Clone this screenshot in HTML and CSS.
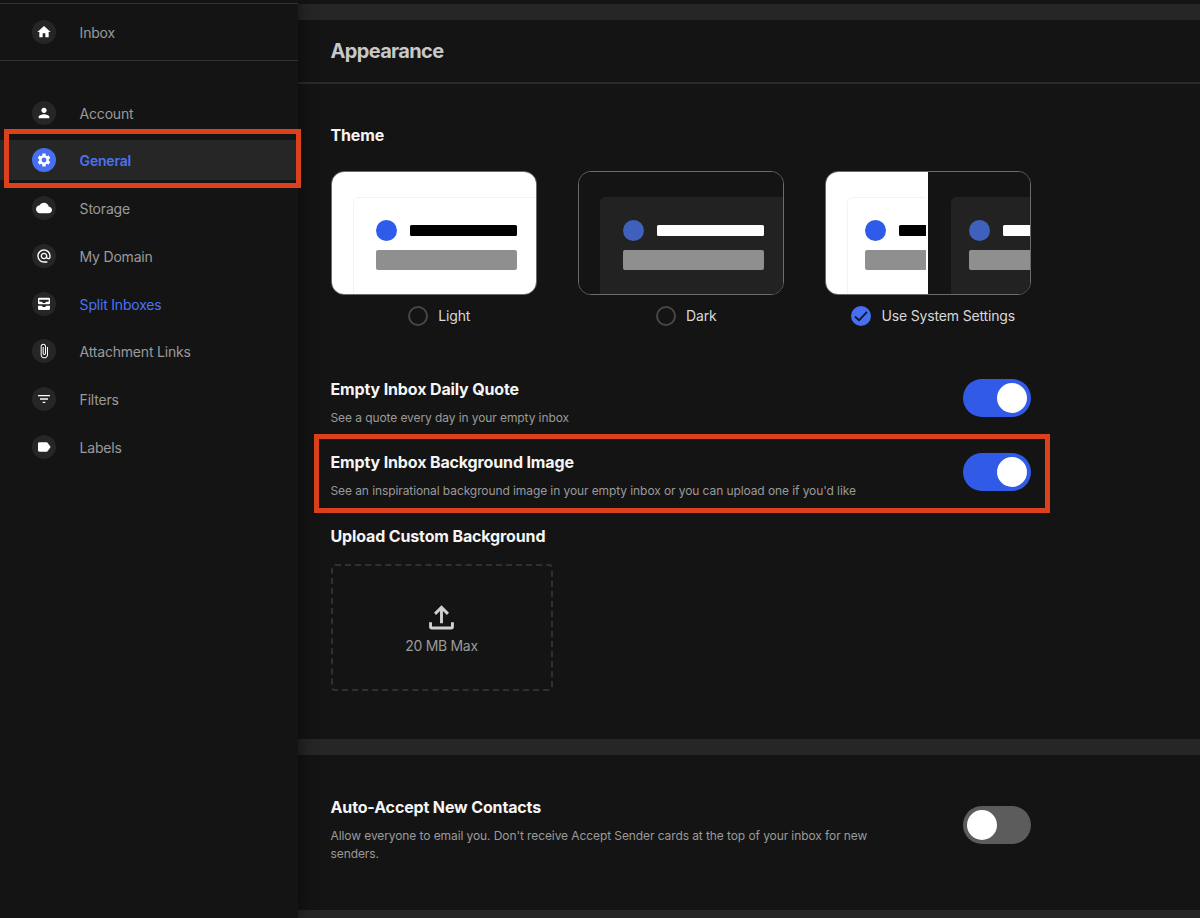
FILE: index.html
```html
<!DOCTYPE html>
<html lang="en">
<head>
    <meta charset="UTF-8">
    <meta name="viewport" content="width=device-width, initial-scale=1.0">
    <title>Settings - General</title>
    <link rel="stylesheet" href="styles.css">
</head>
<body>
    <div class="app">
        <aside class="sidebar">
            <div class="sidebar-top">
                <a class="nav-item">
                    <span class="nav-icon"><svg viewBox="0 0 24 24"><path d="M10 20v-6h4v6h5v-8h3L12 3 2 12h3v8z"/></svg></span>
                    <span class="nav-label">Inbox</span>
                </a>
            </div>

            <nav class="nav-list">
                <a class="nav-item">
                    <span class="nav-icon"><svg viewBox="0 0 24 24"><path d="M12 12c2.21 0 4-1.79 4-4s-1.79-4-4-4-4 1.79-4 4 1.79 4 4 4zm0 2c-2.67 0-8 1.34-8 4v2h16v-2c0-2.66-5.33-4-8-4z"/></svg></span>
                    <span class="nav-label">Account</span>
                </a>
                <a class="nav-item active highlight">
                    <span class="nav-icon"><svg viewBox="0 0 24 24"><path d="M19.14 12.94c.04-.3.06-.61.06-.94 0-.32-.02-.64-.07-.94l2.03-1.58c.18-.14.23-.41.12-.61l-1.92-3.32c-.12-.22-.37-.29-.59-.22l-2.39.96c-.5-.38-1.03-.7-1.62-.94l-.36-2.54c-.04-.24-.24-.41-.48-.41h-3.84c-.24 0-.43.17-.47.41l-.36 2.54c-.59.24-1.13.57-1.62.94l-2.39-.96c-.22-.08-.47 0-.59.22L2.74 8.87c-.12.21-.08.47.12.61l2.03 1.58c-.05.3-.09.63-.09.94s.02.64.07.94l-2.03 1.58c-.18.14-.23.41-.12.61l1.92 3.32c.12.22.37.29.59.22l2.39-.96c.5.38 1.03.7 1.62.94l.36 2.54c.05.24.24.41.48.41h3.84c.24 0 .44-.17.47-.41l.36-2.54c.59-.24 1.13-.56 1.62-.94l2.39.96c.22.08.47 0 .59-.22l1.92-3.32c.12-.22.07-.47-.12-.61l-2.01-1.58zM12 15.6c-1.98 0-3.6-1.62-3.6-3.6s1.62-3.6 3.6-3.6 3.6 1.62 3.6 3.6-1.62 3.6-3.6 3.6z"/></svg></span>
                    <span class="nav-label">General</span>
                </a>
                <a class="nav-item">
                    <span class="nav-icon"><svg viewBox="0 0 24 24"><path d="M19.35 10.04C18.67 6.59 15.64 4 12 4 9.11 4 6.6 5.64 5.35 8.04 2.34 8.36 0 10.91 0 14c0 3.31 2.69 6 6 6h13c2.76 0 5-2.24 5-5 0-2.64-2.05-4.78-4.65-4.96z"/></svg></span>
                    <span class="nav-label">Storage</span>
                </a>
                <a class="nav-item">
                    <span class="nav-icon"><svg viewBox="0 0 24 24"><path d="M12 2C6.48 2 2 6.48 2 12s4.48 10 10 10h5v-2h-5c-4.34 0-8-3.66-8-8s3.66-8 8-8 8 3.66 8 8v1.43c0 .79-.71 1.57-1.5 1.57s-1.5-.78-1.5-1.57V12c0-2.76-2.24-5-5-5s-5 2.24-5 5 2.24 5 5 5c1.38 0 2.64-.56 3.54-1.47.65.89 1.77 1.47 2.96 1.47 1.97 0 3.5-1.6 3.5-3.57V12c0-5.52-4.48-10-10-10zm0 13c-1.66 0-3-1.34-3-3s1.34-3 3-3 3 1.34 3 3-1.34 3-3 3z"/></svg></span>
                    <span class="nav-label">My Domain</span>
                </a>
                <a class="nav-item linked">
                    <span class="nav-icon"><svg viewBox="0 0 24 24"><path fill-rule="evenodd" d="M5 2.5h14a2 2 0 0 1 2 2V11a1.500 1.500 0 0 1-1.500 1.500h-15A1.500 1.500 0 0 1 3 11V4.500a2 2 0 0 1 2-2zM5 5.500v3h3.700c.7 1.400 1.900 2 3.300 2s2.600-.6 3.300-2H19v-3zM3 14.500h5.500c.8 1.400 2 2 3.500 2s2.700-.6 3.500-2H21V19a2 2 0 0 1-2 2H5a2 2 0 0 1-2-2z"/></svg></span>
                    <span class="nav-label">Split Inboxes</span>
                </a>
                <a class="nav-item">
                    <span class="nav-icon"><svg viewBox="0 0 24 24"><path d="M16.500 6v11.500c0 2.210-1.790 4-4 4s-4-1.790-4-4V5c0-1.380 1.120-2.500 2.500-2.500s2.500 1.120 2.500 2.500v10.500c0 .550-.450 1-1 1s-1-.450-1-1V6H10v9.500c0 1.380 1.120 2.500 2.500 2.500s2.500-1.120 2.500-2.500V5c0-2.210-1.790-4-4-4S7 2.790 7 5v12.500c0 3.040 2.460 5.500 5.500 5.500s5.500-2.460 5.500-5.500V6h-1.500z"/></svg></span>
                    <span class="nav-label">Attachment Links</span>
                </a>
                <a class="nav-item">
                    <span class="nav-icon"><svg viewBox="0 0 24 24"><path d="M10 18h4v-2h-4v2zM3 6v2h18V6H3zm3 7h12v-2H6v2z"/></svg></span>
                    <span class="nav-label">Filters</span>
                </a>
                <a class="nav-item">
                    <span class="nav-icon"><svg viewBox="0 0 24 24"><path d="M17.630 5.840C17.270 5.330 16.670 5 16 5L5 5.010C3.900 5.010 3 5.900 3 7v10c0 1.100.9 1.990 2 1.990L16 19c.670 0 1.270-.330 1.630-.840L22 12l-4.370-6.160z"/></svg></span>
                    <span class="nav-label">Labels</span>
                </a>
            </nav>
        </aside>

        <main class="content">
            <section class="panel appearance">
                <h1 class="panel-title">Appearance</h1>

                <div class="panel-body">
                    <h2 class="setting-title">Theme</h2>

                    <div class="theme-grid">
                        <div class="theme-option">
                            <div class="theme-card">
                                <div class="preview light">
                                    <div class="window">
                                        <div class="window-head">
                                            <span class="dot"></span>
                                            <span class="line"></span>
                                        </div>
                                        <div class="block"></div>
                                    </div>
                                </div>
                            </div>
                            <div class="theme-choice">
                                <span class="radio"></span>
                                <span class="theme-name">Light</span>
                            </div>
                        </div>

                        <div class="theme-option">
                            <div class="theme-card">
                                <div class="preview dark">
                                    <div class="window">
                                        <div class="window-head">
                                            <span class="dot"></span>
                                            <span class="line"></span>
                                        </div>
                                        <div class="block"></div>
                                    </div>
                                </div>
                            </div>
                            <div class="theme-choice">
                                <span class="radio"></span>
                                <span class="theme-name">Dark</span>
                            </div>
                        </div>

                        <div class="theme-option">
                            <div class="theme-card split">
                                <div class="preview light">
                                    <div class="window">
                                        <div class="window-head">
                                            <span class="dot"></span>
                                            <span class="line"></span>
                                        </div>
                                        <div class="block"></div>
                                    </div>
                                </div>
                                <div class="preview dark">
                                    <div class="window">
                                        <div class="window-head">
                                            <span class="dot"></span>
                                            <span class="line"></span>
                                        </div>
                                        <div class="block"></div>
                                    </div>
                                </div>
                            </div>
                            <div class="theme-choice">
                                <span class="radio checked"><svg viewBox="0 0 20 20"><path d="M4 10.500l4 3.800 8-8.500"/></svg></span>
                                <span class="theme-name">Use System Settings</span>
                            </div>
                        </div>
                    </div>

                    <div class="setting-row">
                        <div>
                            <h2 class="setting-title">Empty Inbox Daily Quote</h2>
                            <p class="setting-text">See a quote every day in your empty inbox</p>
                        </div>
                        <span class="toggle on"></span>
                    </div>

                    <div class="setting-row highlight">
                        <div>
                            <h2 class="setting-title">Empty Inbox Background Image</h2>
                            <p class="setting-text">See an inspirational background image in your empty inbox or you can upload one if you'd like</p>
                        </div>
                        <span class="toggle on"></span>
                    </div>

                    <div class="upload">
                        <h2 class="setting-title">Upload Custom Background</h2>
                        <div class="upload-box">
                            <svg class="upload-icon" viewBox="0 0 24 24"><path d="M1.500 16.500v4.300a1.200 1.200 0 0 0 1.200 1.200h18.600a1.200 1.200 0 0 0 1.200-1.200v-4.300M12 17.500V2.500M5.800 8.500L12 2.300l6.200 6.200"/></svg>
                            <span>20 MB Max</span>
                        </div>
                    </div>
                </div>
            </section>

            <section class="panel contacts">
                <div class="setting-row">
                    <div>
                        <h2 class="setting-title">Auto-Accept New Contacts</h2>
                        <p class="setting-text">Allow everyone to email you. Don't receive Accept Sender cards at the top of your inbox for new senders.</p>
                    </div>
                    <span class="toggle"></span>
                </div>
            </section>
        </main>
    </div>
</body>
</html>
```
FILE: styles.css
```css
* {
    margin: 0;
    padding: 0;
    box-sizing: border-box;
}

:root {
    --bg: #141414;
    --band: #262626;
    --line: #333;
    --primary: #4a72f5;
    --toggle: #315be6;
    --text: #f5f5f5;
    --muted: #9a9a9a;
    --mark: #dd401d;
}

body {
    height: 918px;
    overflow: hidden;
    background: var(--bg);
    color: var(--text);
    font-family: Inter, "Liberation Sans", sans-serif;
}

.app {
    display: flex;
    height: 918px;
}

/* Sidebar */
.sidebar {
    position: relative;
    z-index: 1;
    width: 298px;
    flex-shrink: 0;
    padding-top: 3px;
    background: var(--bg);
    box-shadow: 0 0 16px rgba(0, 0, 0, 0.6);
}

.sidebar-top {
    height: 58px;
    padding-top: 8px;
    border-top: 1px solid var(--line);
    border-bottom: 1px solid var(--line);
}

.nav-list {
    display: flex;
    flex-direction: column;
    gap: 7.75px;
    padding-top: 31.5px;
}

.nav-item {
    display: flex;
    align-items: center;
    gap: 24px;
    height: 40px;
    padding-left: 31.6px;
    color: var(--muted);
    font-size: 14px;
    letter-spacing: -0.2px;
}

.nav-label {
    padding-top: 1.3px;
}

.nav-icon {
    display: flex;
    align-items: center;
    justify-content: center;
    width: 24px;
    height: 24px;
    border-radius: 50%;
    background: var(--band);
}

.nav-icon svg {
    width: 16px;
    height: 16px;
    fill: #fff;
}

.nav-item.active {
    background: var(--band);
    color: var(--primary);
    font-weight: 600;
}

.nav-item.active .nav-icon {
    background: #466ff2;
}

.nav-item.linked {
    color: var(--primary);
}

/* Red frames around the settings being pointed out */
.highlight {
    position: relative;
}

.highlight::after {
    content: '';
    position: absolute;
    border: 5px solid var(--mark);
}

.nav-item.highlight::after {
    top: -11px;
    right: -3px;
    bottom: -8px;
    left: 4px;
}

.setting-row.highlight::after {
    top: -19px;
    right: -19px;
    bottom: -22px;
    left: -17px;
}

/* Content */
.content {
    flex: 1;
    padding-top: 4px;
}

.panel {
    border-top: 16px solid var(--band);
}

.appearance {
    height: 735px;
}

.contacts {
    height: 187px;
    padding: 50.5px 0 0 32.5px;
    border-bottom: 16px solid var(--band);
}

.panel-title {
    height: 64px;
    padding-left: 32.5px;
    border-bottom: 2px solid #2b2b2b;
    color: #c8c8c8;
    font-size: 20px;
    font-weight: 700;
    letter-spacing: -0.65px;
    line-height: 62px;
}

.panel-body {
    padding: 39.5px 0 0 32.5px;
}

.setting-title {
    font-size: 16px;
    font-weight: 700;
    letter-spacing: -0.14px;
    line-height: 22px;
}

.setting-text {
    width: 550px;
    margin-top: 9px;
    color: var(--muted);
    font-size: 12px;
    letter-spacing: -0.09px;
    line-height: 18px;
}

.setting-row {
    display: flex;
    justify-content: space-between;
    width: 700px;
    height: 38px;
    margin-bottom: 35.6px;
}

.setting-row .setting-title {
    margin-top: -1.3px;
}

.contacts .setting-row .setting-title {
    margin-top: -10px;
}

/* Theme picker */
.theme-grid {
    display: grid;
    grid-template-columns: repeat(3, 206px);
    justify-content: space-between;
    width: 700px;
    margin: 25.5px 0 53px;
}

.theme-card {
    display: flex;
    height: 124px;
    overflow: hidden;
    border: 1.5px solid #6b6b6b;
    border-radius: 13px;
}

.preview {
    flex: 1;
    min-width: 0;
    padding: 24.5px 0 0 21.5px;
    overflow: hidden;
}

.window {
    width: 190px;
    height: 110px;
    padding: 22.5px 0 0 22px;
    border: 1px solid #f3f3f3;
    border-radius: 5px;
}

.window-head {
    display: flex;
    align-items: center;
    gap: 13px;
}

.dot {
    width: 21px;
    height: 21px;
    border-radius: 50%;
    background: #2f5bea;
}

.line {
    width: 107px;
    height: 11px;
    border-radius: 1.5px;
    background: #000;
}

.block {
    width: 141px;
    height: 20px;
    margin-top: 9px;
    border-radius: 2px;
    background: #8f8f8f;
}

.light {
    background: #fff;
}

.dark {
    background: var(--bg);
}

.dark .window {
    border-color: #222;
    background: #222;
}

.dark .dot {
    background: #3f61bd;
}

.dark .line {
    background: #fff;
}

.split .window {
    padding-left: 17px;
}

.split .light {
    border-right: 2px solid #fff;
}

.split .dark {
    padding-left: 22.5px;
}

.theme-choice {
    display: flex;
    align-items: center;
    justify-content: center;
    gap: 10.5px;
    height: 20px;
    margin-top: 11px;
    padding-left: 11px;
    color: #d8d8d8;
    font-size: 14px;
    letter-spacing: -0.17px;
}

.theme-name {
    margin-top: -2px;
}

.radio {
    width: 20px;
    height: 20px;
    border: 2px solid #474747;
    border-radius: 50%;
}

.radio.checked {
    border: none;
    background: #466ff2;
}

.radio svg {
    display: block;
    fill: none;
    stroke: var(--bg);
    stroke-width: 1.8;
}

/* Toggle */
.toggle {
    width: 68px;
    height: 38px;
    padding: 4px;
    border-radius: 19px;
    background: #5c5c5c;
}

.toggle::before {
    content: '';
    display: block;
    width: 30px;
    height: 30px;
    border-radius: 50%;
    background: #fff;
}

.toggle.on {
    background: var(--toggle);
}

.toggle.on::before {
    margin-left: auto;
}

/* Upload */
.upload {
    margin-top: -1px;
}

.upload-box {
    display: flex;
    flex-direction: column;
    align-items: center;
    width: 222px;
    height: 127px;
    margin-top: 16.5px;
    padding-top: 39px;
    border: 2px dashed #303030;
    border-radius: 4px;
    color: var(--muted);
    font-size: 14px;
    letter-spacing: -0.3px;
}

.upload-icon {
    width: 25px;
    height: 25px;
    margin-bottom: 7px;
    fill: none;
    stroke: #d0d0d0;
    stroke-width: 2.8;
}
```
